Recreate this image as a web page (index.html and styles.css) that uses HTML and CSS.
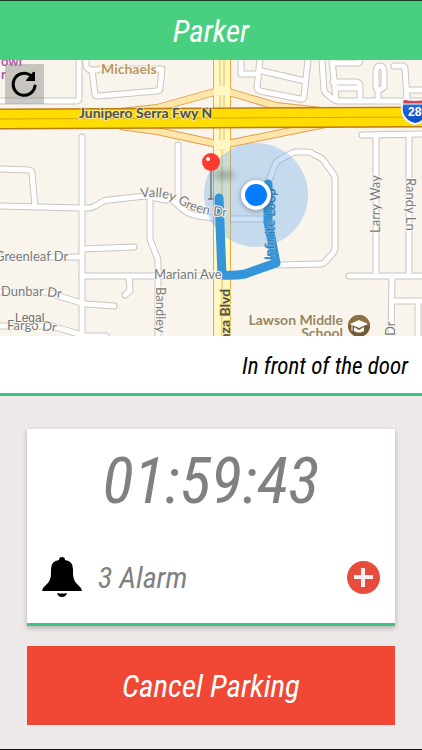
FILE: index.html
```html
<!DOCTYPE html>
<html lang="en">
<head>
  <meta charset="utf-8">
  <meta name="viewport" content="width=device-width, initial-scale=1">
  <title>Parker</title>
  <link rel="stylesheet" href="styles.css">
</head>
<body>
  <header class="header">
    <h1>Parker</h1>
  </header>

  <div class="map-container">
    <svg class="map" viewBox="0 60 422 276" preserveAspectRatio="xMidYMid slice" role="img" aria-label="Map">
      <defs>
        <g id="streets">
          <path d="M0 101H76Q79 101 79 98V60"/>
          <path d="M86 60V65Q87 70 92 70H97M92 70L95 94Q95 96 98 96L157 91Q160 91 160 88L162 69H100"/>
          <path d="M241 60V74H257M260 60L257 87Q257 90 260 91L300 99Q304 100 304 96L308 60M262 71L305 81"/>
          <path d="M322 60L324 90Q325 93 328 95L333 99Q335 101 338 101H422"/>
          <path d="M332 60L336 99M333 63H357Q360 63 360 59M333 82H356Q360 82 360 87V101M335 88H358"/>
          <path d="M378 101V91L376 87V73Q376 66 380 66T384 73V87L378 91M394 66H403Q405 66 405 69L407 99M407 90H422"/>
          <path d="M82 137V340M0 169L29 170Q32 170 32 173L35 207M0 206L80 208H88Q92 208 95 206L104 201Q106 200 109 200L145 196L166 200"/>
          <path d="M178 145V203M150 195V237Q150 240 151 242L157 257Q158 259 158 262V340"/>
          <path d="M145 196H165Q172 199 180 207Q187 214 198 216L213 218"/>
          <path d="M82 249L134 247M0 257H82M82 276H213M129 276L130 291L125 295"/>
          <path d="M0 292H46L65 298L85 304L114 306M0 326H52L85 336H106L109 341"/>
          <path d="M267 185L275 165Q276 162 279 160L292 153Q295 152 298 152H308Q311 152 313 154L321 158Q323 159 324 161L334 175Q335 177 335 180V247Q335 251 333 253L325 262Q323 264 320 264L278 265"/>
          <path d="M230 219H267M362 135L422 134M376 135V275M409 135V275M349 276H422M392 276L391 340M392 301H422M418 301V340"/>
        </g>
        <g id="ramps">
          <path d="M120 112L157 108L222 90M120 126L157 131L222 145M222 90L276 106L330 112M222 145L330 123"/>
        </g>
        <linearGradient id="shield" x1="0" y1="0" x2="0" y2="1">
          <stop offset="0" stop-color="#2a74ea"/>
          <stop offset="1" stop-color="#0d49c0"/>
        </linearGradient>
      </defs>

      <rect class="land" x="0" y="60" width="422" height="276"/>
      <use href="#streets" class="street-edge"/>
      <use href="#streets" class="street"/>

      <!-- freeway and boulevard -->
      <use href="#ramps" class="ramp-edge"/>
      <path class="boulevard-edge" d="M222 60V340"/>
      <path class="boulevard" d="M222 60V340"/>
      <path class="boulevard-line" d="M220 60V150M224 60V150M222 150V340"/>
      <use href="#ramps" class="ramp"/>
      <path class="boulevard" d="M222 86V95M222 140V149"/>
      <path class="freeway-edge" d="M0 119L213 118L422 117"/>
      <path class="freeway" d="M0 119L213 118L422 117"/>
      <path class="freeway-line" d="M0 119L213 118L422 117"/>

      <!-- route and current position -->
      <circle class="accuracy" cx="256" cy="195" r="52"/>
      <path class="route" d="M219 198L222 275Q234 276 245 274L276 263L268 222V184"/>

      <g class="label">
        <path id="valley" d="M141 198Q162 194 180 204Q196 216 238 217" fill="none"/>
        <text><textPath href="#valley">Valley Green Dr</textPath></text>
        <text x="-5" y="261">Greenleaf Dr</text>
        <text x="154" y="279">Mariani Ave</text>
        <path id="dunbar" d="M1 296L44 296L76 300" fill="none"/>
        <text><textPath href="#dunbar">Dunbar Dr</textPath></text>
        <path id="fargo" d="M7 330L40 330L76 334" fill="none"/>
        <text><textPath href="#fargo">Fargo Dr</textPath></text>
        <text transform="translate(156 287) rotate(90)">Bandley</text>
        <text transform="translate(380 233) rotate(-90)">Larry Way</text>
        <text transform="translate(406 178) rotate(90)">Randy Ln</text>
        <text transform="translate(395 336) rotate(-90)">Dr</text>
        <text class="on-route" transform="translate(274 260) rotate(-89)">Infinite Loop</text>
      </g>
      <text class="label-road" transform="translate(230 351) rotate(-90)">Anza Blvd</text>
      <text class="label-road" x="79" y="118">Junipero Serra Fwy N</text>
      <text class="label-legal" x="15" y="322">Legal</text>
      <text class="label-place" x="101" y="74">Michaels</text>
      <text class="label-place school" x="343" y="325" text-anchor="end">Lawson Middle</text>
      <text class="label-place school" x="343" y="338" text-anchor="end">School</text>
      <text class="label-bowl" x="1" y="66">owl</text>
      <text class="label-bowl" x="1" y="79">r</text>

      <!-- school badge -->
      <circle cx="359" cy="326" r="11" fill="#765a31"/>
      <path d="M348 326A11 11 0 0 1 370 326Q359 320 348 326Z" fill="#8e7144"/>
      <path d="M350 324L359 320L368 324L359 328Z" fill="#fff"/>
      <path d="M354 327V331Q359 334 364 331V327L359 330Z" fill="#fff"/>
      <path d="M352 325V331" stroke="#fff"/>

      <!-- interstate shield -->
      <path d="M404 99Q415 102 426 99Q431 108 427 115Q423 123 415 124Q406 122 403 115Q400 107 404 99Z" fill="url(#shield)" stroke="#eef2fa" stroke-width="2"/>
      <path d="M404 100Q415 102 426 100L428 103H403Z" fill="#d9434d"/>
      <path d="M402 104H428" stroke="#fff"/>
      <text class="shield-text" x="408" y="116">280</text>

      <!-- pin -->
      <ellipse class="pin-shadow" cx="224" cy="175" rx="11" ry="4"/>
      <path d="M211 170V199" stroke="#8d8d8d" stroke-width="2"/>
      <path d="M208 199H213" fill="none" stroke="#454545"/>
      <circle cx="211" cy="162" r="9" fill="#fb3b30"/>
      <circle cx="208" cy="159" r="2" fill="#fff"/>

      <circle class="dot-shadow" cx="256" cy="196" r="16"/>
      <circle cx="256" cy="195" r="15" fill="#fff"/>
      <circle cx="256" cy="195" r="11" fill="#057dff"/>
    </svg>
    <button class="refresh" type="button" aria-label="Refresh">
      <svg viewBox="0 0 39 40" width="39" height="40" aria-hidden="true">
        <path d="M25 11A11 11 0 1 0 30 22" fill="none" stroke="#000" stroke-width="3" stroke-linecap="round"/>
        <path d="M28 8Q30 7 30 9V17H22Q20 17 22 15Z"/>
      </svg>
    </button>
  </div>

  <p class="note">In front of the door</p>

  <main class="container">
    <section class="card">
      <div class="timer">01:59:43</div>
      <div class="alarm">
        <svg class="bell" viewBox="0 0 40 40" width="40" height="40" aria-hidden="true">
          <path d="M17 3Q17 0 20 0T23 3Q31 4 31 12V17Q31 24 37 29Q40 31 40 34H0Q0 31 3 29Q9 24 9 17V12Q9 4 17 3Z"/>
          <path d="M15 36Q20 37 25 36Q24 40 20 40T15 36Z"/>
        </svg>
        <span class="alarm-text">3 Alarm</span>
        <button class="add" type="button" aria-label="Add alarm">
          <svg viewBox="0 0 33 33" width="33" height="33" aria-hidden="true">
            <path d="M16 7V26M7 16H26" stroke="#fbeeee" stroke-width="4"/>
          </svg>
        </button>
      </div>
    </section>
    <button class="cancel" type="button">Cancel Parking</button>
  </main>
</body>
</html>
```
FILE: styles.css
```css
* {
  box-sizing: border-box;
}
body {
  display: flex;
  flex-direction: column;
  min-height: 100vh;
  margin: 0;
  background: #ede9e8;
  border-bottom: 1px solid #111;
  font-family: "Roboto Condensed", "Liberation Sans Narrow", Roboto, sans-serif;
  font-style: italic;
}
.header {
  display: flex;
  align-items: center;
  justify-content: center;
  height: 60px;
  padding-top: 2px;
  background: #48cf80;
  border-top: 1px solid #173d26;
}
h1 {
  margin: 0;
  color: #fff;
  font-size: 31px;
  font-weight: 400;
}
button {
  padding: 0;
  border: 0;
  font: inherit;
  cursor: pointer;
}

/* map */
.map-container {
  position: relative;
  height: 276px;
  overflow: hidden;
}
.map {
  display: block;
  width: 100%;
  height: 100%;
  font-family: Lato, sans-serif;
  font-style: normal;
}
.land {
  fill: #f9f4ec;
}
.street-edge,
.street,
.ramp-edge,
.ramp {
  fill: none;
  stroke-linejoin: round;
}
.street-edge,
.street {
  stroke-linecap: round;
}
.street-edge {
  stroke: #c9c5c0;
  stroke-width: 7px;
}
.street {
  stroke: #fff;
  stroke-width: 5px;
}
.ramp-edge {
  stroke: #dfa04f;
  stroke-width: 8px;
}
.ramp {
  stroke: #ffe5a8;
  stroke-width: 6px;
}
.boulevard-edge {
  stroke: #efa937;
  stroke-width: 18px;
}
.boulevard {
  stroke: #fff8c4;
  stroke-width: 16px;
}
.boulevard-line {
  stroke: #efb650;
}
.freeway-edge,
.freeway,
.freeway-line {
  fill: none;
}
.freeway-edge {
  stroke: #b97c13;
  stroke-width: 21px;
}
.freeway {
  stroke: #ffdd00;
  stroke-width: 18px;
}
.freeway-line {
  stroke: #d5a800;
}
.accuracy {
  fill: #68aaf0;
  fill-opacity: 0.35;
}
.route {
  fill: none;
  stroke: #3495db;
  stroke-width: 9px;
  stroke-linecap: round;
  stroke-linejoin: round;
}
.label text,
.label-road,
.label-legal,
.label-place,
.label-bowl {
  paint-order: stroke;
  stroke: #fbf8f2;
  stroke-width: 2px;
  stroke-linejoin: round;
}
.label text {
  fill: #77787b;
  font-size: 13px;
}
.label .on-route {
  fill: #2c75ae;
  stroke: #7ebbe9;
  stroke-width: 1px;
}
.label-road {
  fill: #50504a;
  stroke: #f6e795;
  font-size: 14px;
  font-weight: 700;
}
.label-legal {
  fill: #6b6b6b;
  font-family: "Liberation Sans", sans-serif;
  font-size: 12px;
}
.label-place {
  fill: #b99a5d;
  font-size: 14px;
  font-weight: 700;
}
.school {
  fill: #97865c;
}
.label-bowl {
  fill: #b356a8;
  font-size: 13px;
  font-weight: 700;
}
.shield-text {
  fill: #fff;
  font-family: "Liberation Sans", sans-serif;
  font-size: 12px;
  font-weight: 700;
}
.pin-shadow {
  fill: #000;
  fill-opacity: 0.25;
  filter: blur(3px);
}
.dot-shadow {
  fill: #000;
  fill-opacity: 0.25;
  filter: blur(2px);
}
.refresh {
  position: absolute;
  top: 4px;
  left: 5px;
  width: 39px;
  height: 40px;
  background: rgba(140, 140, 135, 0.45);
}
.refresh svg {
  display: block;
}

.note {
  display: flex;
  align-items: center;
  justify-content: flex-end;
  height: 60px;
  margin: 0;
  padding: 4px 14px 0;
  background: #fff;
  border-bottom: 3px solid #3fc380;
  color: #000;
  font-size: 23px;
}

/* timer card */
.container {
  display: flex;
  flex-direction: column;
  gap: 20px;
  padding: 33px 27px 24px;
}
.card {
  padding: 14px 15px 26px;
  background: #fff;
  border-bottom: 3px solid #3fc380;
  box-shadow: 0 2px 5px rgba(0, 0, 0, 0.25);
}
.timer {
  color: #808080;
  font-size: 65px;
  line-height: 76px;
  text-align: center;
}
.alarm {
  display: flex;
  align-items: center;
  margin-top: 38px;
}
.alarm-text {
  flex: 1;
  margin-left: 16px;
  color: #808080;
  font-size: 30px;
}
.add {
  width: 33px;
  height: 33px;
  border-radius: 50%;
  background: #e74c3c;
}
.add svg {
  display: block;
}
.cancel {
  height: 79px;
  padding-top: 2px;
  background: #f14836;
  color: #fff;
  font-size: 31px;
}
```
